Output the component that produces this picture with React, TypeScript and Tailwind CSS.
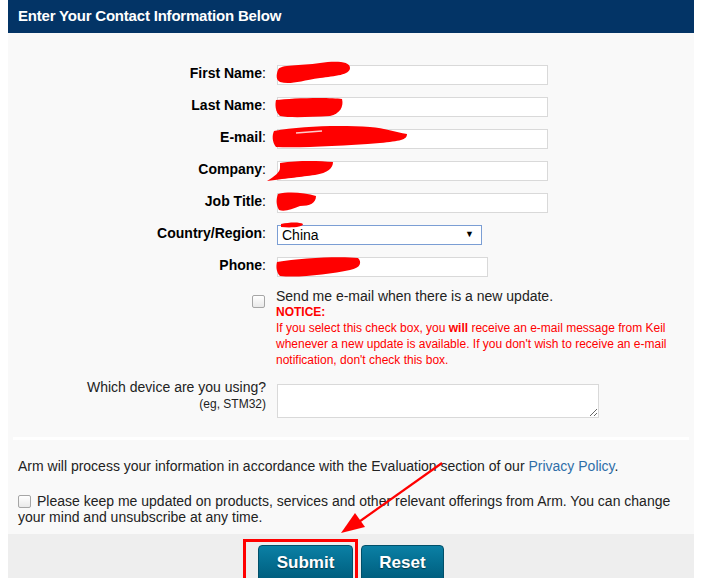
import React from "react";

const FONT = "font-['Liberation_Sans',Arial,sans-serif]";

type Row = { label: string; kind: "text" | "select"; width: string };

const ROWS: Row[] = [
  { label: "First Name", kind: "text", width: "w-[271px]" },
  { label: "Last Name", kind: "text", width: "w-[271px]" },
  { label: "E-mail", kind: "text", width: "w-[271px]" },
  { label: "Company", kind: "text", width: "w-[271px]" },
  { label: "Job Title", kind: "text", width: "w-[271px]" },
  { label: "Country/Region", kind: "select", width: "w-[205px]" },
  { label: "Phone", kind: "text", width: "w-[211px]" },
];

function Checkbox() {
  return (
    <span className="inline-block h-[13px] w-[13px] shrink-0 rounded-[2px] border border-[#a6a6a6] bg-gradient-to-b from-white to-[#e9e9e9] align-[-2px]" />
  );
}

// red marker scribbles + arrow drawn on the screenshot
function Annotations() {
  return (
    <svg
      className="pointer-events-none absolute left-0 top-0"
      width="704"
      height="578"
      viewBox="0 0 704 578"
    >
      <g fill="#ff0000">
        <path d="M278,70 C280,64 300,66 320,63 C335,61 350,61 350,68 C350,75 335,76 320,78 C300,81 290,85 280,82 C276,80 276,75 278,70 Z" />
        <path d="M276,100 C290,98 330,97 342,99 C344,106 340,114 330,116 C310,117 290,118 280,116 C275,112 275,104 276,100 Z" />
        <path d="M274,131 C300,126 340,125 370,127 C385,128 395,132 407,134 C407,140 400,141 380,143 C340,146 300,148 276,147 C272,142 272,135 274,131 Z" />
        <path d="M280,163 C300,160 320,161 333,162 C333,168 328,173 315,175 C300,177 290,178 267,181 C275,176 280,172 280,168 Z" />
        <path d="M278,194 C290,191 305,193 316,196 C316,203 310,206 300,206 C292,209 285,212 279,210 C276,205 276,199 278,194 Z" />
        <path d="M281,224 C290,222 300,222 303,224 C303,227 292,228 281,227 Z" />
        <path d="M277,262 C300,258 340,256 358,258 C362,262 361,268 350,270 C330,274 300,278 280,276 C276,272 276,266 277,262 Z" />
      </g>
      <path d="M296,133 L322,131" stroke="#ffffff" strokeWidth="1.5" opacity="0.8" />
      <line x1="442" y1="463" x2="356" y2="524" stroke="#ff0000" strokeWidth="2.2" />
      <polygon points="341,533 365,527 355,513" fill="#ff0000" />
      <rect x="244.5" y="540.5" width="112" height="45" fill="none" stroke="#ff0000" strokeWidth="3" />
    </svg>
  );
}

export default function App() {
  return (
    <div className={`relative min-h-screen bg-white px-2 ${FONT}`}>
      <div className="w-[686px] bg-[#f9f9f9]">
        <div className="flex h-[33px] items-center bg-[#033466] pl-[10px] text-[15px] font-bold tracking-[-0.2px] text-white">
          Enter Your Contact Information Below
        </div>

        <div className="pt-[26px]">
          {ROWS.map((r) => (
            <div key={r.label} className="flex h-[32px] items-center">
              <label className="w-[258px] pb-[3px] text-right text-[14px] text-black">
                <b>{r.label}</b>:
              </label>
              <div className="ml-[11px]">
                {r.kind === "select" ? (
                  <div
                    className={`flex h-[20px] ${r.width} items-center justify-between border border-[#7b9ed4] bg-white pl-[4px] pr-[7px] text-[14px] text-black`}
                  >
                    <span>China</span>
                    <span className="text-[9px]">▼</span>
                  </div>
                ) : (
                  <input
                    type="text"
                    className={`block h-[20px] ${r.width} border border-[#d9d9d9] bg-white outline-none`}
                  />
                )}
              </div>
            </div>
          ))}

          <div className="mt-[5px] flex">
            <div className="w-[244px]" />
            <div className="pt-[1px]">
              <Checkbox />
            </div>
            <div className="ml-[11px] leading-[16px]">
              <div className="text-[14px] text-[#222]">
                Send me e-mail when there is a new update.
              </div>
              <div className="text-[12px] font-bold text-[#f00]">NOTICE:</div>
              <div className="text-[12px] text-[#f00]">
                If you select this check box, you <b>will</b> receive an e-mail message from Keil
                <br />
                whenever a new update is available. If you don't wish to receive an e-mail
                <br />
                notification, don't check this box.
              </div>
            </div>
          </div>

          <div className="mt-[10px] flex items-start">
            <div className="w-[258px] text-right text-[#222]">
              <div className="text-[14px] leading-[18px]">Which device are you using?</div>
              <div className="text-[12px] leading-[16px]">(eg, STM32)</div>
            </div>
            <textarea className="ml-[11px] mt-[6px] block h-[34px] w-[322px] border border-[#d9d9d9] bg-white outline-none" />
          </div>

          <div className="mx-[5px] mt-[19px] h-[3px] bg-white" />

          <p className="mt-[18px] px-[10px] text-[14px] leading-[16px] text-[#222]">
            Arm will process your information in accordance with the Evaluation section of our{" "}
            <a className="text-[#2f6ea8]">Privacy Policy</a>.
          </p>

          <p className="mt-[19px] px-[10px] text-[14px] leading-[16px] text-[#222]">
            <Checkbox />
            <span className="ml-[6px]">
              Please keep me updated on products, services and other relevant offerings from Arm. You can change
            </span>
            <br />
            your mind and unsubscribe at any time.
          </p>

          <div className="mt-[9px] flex justify-center gap-[8px] bg-[#eeeeee] pb-[12px] pt-[11px]">
            <button className="h-[36px] w-[95px] rounded-t-[4px] border border-[#004f69] bg-gradient-to-b from-[#0b80a5] to-[#005d7d] text-[17px] font-bold text-white [text-shadow:0_1px_1px_rgba(0,0,0,0.5)]">
              Submit
            </button>
            <button className="h-[36px] w-[83px] rounded-t-[4px] border border-[#004f69] bg-gradient-to-b from-[#0b80a5] to-[#005d7d] text-[17px] font-bold text-white [text-shadow:0_1px_1px_rgba(0,0,0,0.5)]">
              Reset
            </button>
          </div>
        </div>
      </div>
      <Annotations />
    </div>
  );
}
